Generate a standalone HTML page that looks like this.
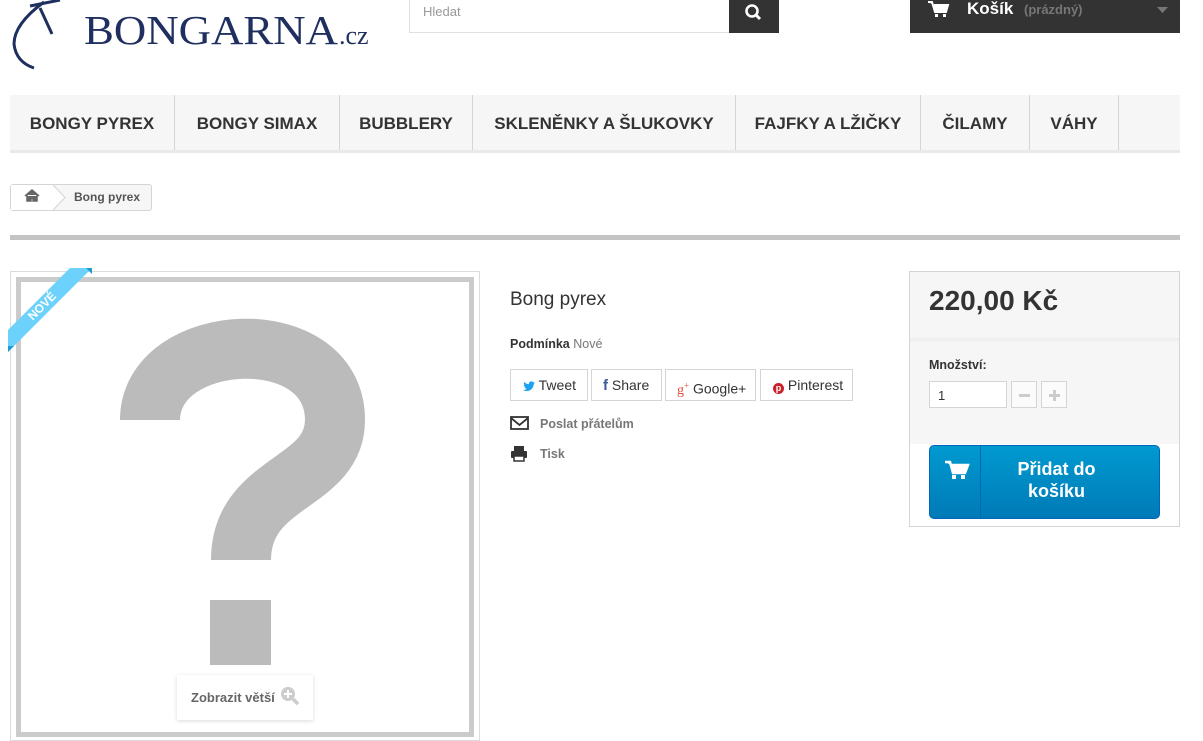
<!DOCTYPE html>
<html><head><meta charset="utf-8"><style>
*{box-sizing:border-box;margin:0;padding:0}
body{width:1203px;height:727px;overflow:hidden;background:#fff;font-family:"Liberation Sans",Arial,sans-serif;color:#333;position:relative}
.a{position:absolute}
.nav{left:10px;top:95px;width:1170px;height:58px;background:#f6f6f6;border-bottom:3px solid #e9e9e9}
.nav div{position:absolute;top:0;height:55px;line-height:57px;font-weight:bold;font-size:17px;color:#333;text-align:center;border-right:1px solid #d6d4d4}
.sb{border:1px solid #d6d4d4;background:#fff;font-size:14px;color:#333;height:32px;line-height:30px;top:369px}
</style></head><body>
<!-- logo -->
<svg class="a" style="left:0;top:0" width="400" height="80">
<path d="M44 2 Q14 24 14 44 Q16 62 34 68" fill="none" stroke="#1f2f5f" stroke-width="3"/>
<line x1="40" y1="8" x2="52" y2="34" stroke="#1f2f5f" stroke-width="3"/>
<line x1="30" y1="6" x2="60" y2="0" stroke="#1f2f5f" stroke-width="3"/>
<text x="84" y="44" font-family="Liberation Serif,serif" font-size="41" fill="#1f2f5f" textLength="254" lengthAdjust="spacingAndGlyphs">BONGARNA</text>
<text x="339" y="44" font-family="Liberation Serif,serif" font-size="26" fill="#1f2f5f">.cz</text>
</svg>
<!-- search -->
<div class="a" style="left:409px;top:-1px;width:321px;height:34px;border:1px solid #e0e0e0;font-size:13px;color:#999;padding:4px 13px">Hledat</div>
<div class="a" style="left:729px;top:0;width:50px;height:33px;background:#333">
<svg width="50" height="33"><circle cx="23" cy="11" r="5.5" fill="none" stroke="#fff" stroke-width="2.6"/><line x1="27" y1="15" x2="31" y2="19" stroke="#fff" stroke-width="3"/></svg></div>
<!-- cart -->
<div class="a" style="left:910px;top:0;width:270px;height:33px;background:#333">
<svg class="a" style="left:16px;top:0" width="24" height="20"><path d="M2 2h4l3 10h11l2-7H8" fill="#fff" stroke="#fff" stroke-width="2"/><rect x="9" y="14" width="3" height="3" fill="#fff"/><rect x="17" y="14" width="3" height="3" fill="#fff"/></svg>
<span class="a" style="left:57px;top:-1px;color:#fff;font-weight:bold;font-size:17px">Košík</span>
<span class="a" style="left:114px;top:2px;color:#777;font-weight:bold;font-size:13px">(prázdný)</span>
<svg class="a" style="left:246px;top:6px" width="14" height="8"><path d="M1 1h11l-5.5 6z" fill="#777"/></svg>
</div>
<!-- nav -->
<div class="a nav">
<div style="left:0;width:165px">BONGY PYREX</div>
<div style="left:165px;width:165px">BONGY SIMAX</div>
<div style="left:330px;width:133px">BUBBLERY</div>
<div style="left:463px;width:263px">SKLENĚNKY A ŠLUKOVKY</div>
<div style="left:726px;width:185px">FAJFKY A LŽIČKY</div>
<div style="left:911px;width:109px">ČILAMY</div>
<div style="left:1020px;width:89px">VÁHY</div>
</div>
<!-- breadcrumb -->
<div class="a" style="left:10px;top:184px;width:142px;height:27px;border:1px solid #d6d4d4;border-radius:3px;background:#f6f6f6">
<div class="a" style="left:0;top:0;width:42px;height:25px;background:#fff"></div>
<svg class="a" style="left:0;top:0" width="60" height="25"><path d="M42 0 L54 12.5 L42 25" fill="#fff" stroke="#d6d4d4"/><path d="M14 11 L21 5 L28 11 M16 10v6h4v-3h2v3h4v-6" fill="#666" stroke="#666" stroke-width="1.5"/></svg>
<span class="a" style="left:63px;top:5px;font-size:12px;font-weight:bold;color:#555">Bong pyrex</span>
</div>
<div class="a" style="left:10px;top:235px;width:1170px;height:5px;background:#c4c4c4"></div>
<!-- image -->
<div class="a" style="left:10px;top:271px;width:470px;height:470px;border:1px solid #dbdbdb"></div>
<div class="a" style="left:16px;top:277px;width:458px;height:460px;border:5px solid #cbcbcb;background:#fff"></div>
<svg class="a" style="left:0;top:0" width="490" height="727">
<path d="M150 420 C150 330 335 320 335 420 C335 485 241 480 241 560" fill="none" stroke="#bbb" stroke-width="60" stroke-linejoin="round"/>
<rect x="210" y="600" width="61" height="65" fill="#bbb"/>
<polygon points="8,330 8,352 92,268 70,268" fill="#6dd2fb"/>
<polygon points="86,268 92,268 92,274" fill="#1e9bd0"/>
<polygon points="8,346 8,352 14,346" fill="#1e9bd0"/>
<text transform="translate(42,306) rotate(-45)" text-anchor="middle" y="4" font-size="12" font-weight="bold" fill="#fff">NOVÉ</text>
</svg>
<div class="a" style="left:177px;top:675px;width:136px;height:45px;background:#fff;box-shadow:0 1px 4px rgba(0,0,0,.15);font-size:13px;font-weight:bold;color:#666;padding:15px 0 0 14px">Zobrazit větší
<svg class="a" style="left:102px;top:10px" width="22" height="22"><circle cx="9" cy="9" r="7" fill="#ccc"/><path d="M9 5v8M5 9h8" stroke="#fff" stroke-width="2"/><line x1="14" y1="14" x2="19" y2="19" stroke="#ccc" stroke-width="3.5"/></svg></div>
<!-- center -->
<div class="a" style="left:510px;top:289px;font-size:19px;color:#333">Bong pyrex</div>
<div class="a" style="left:510px;top:337px;font-size:12.5px;color:#777"><b style="color:#333">Podmínka</b> Nové</div>
<div class="a sb" style="left:510px;width:78px;padding-left:12px"><svg width="12" height="10" style="vertical-align:-1px"><path d="M12 1.5c-.5.2-1 .4-1.4.4.5-.3.9-.8 1.1-1.3-.5.3-1 .5-1.6.6C9.6.7 9 .4 8.3.4 7 .4 5.9 1.5 5.9 2.8c0 .2 0 .4.1.5C4 3.2 2.3 2.3 1.1.9.9 1.3.8 1.7.8 2.1.8 3 1.2 3.7 1.9 4.1 1.5 4.1 1.1 4 .8 3.8c0 1.2.8 2.1 1.9 2.4-.4.1-.8.1-1.1 0 .3.9 1.2 1.7 2.2 1.7C3 8.6 1.8 9 .6 9H0c1.1.7 2.3 1 3.7 1C8.2 10 10.7 6.3 10.7 3.1v-.3c.5-.3.9-.8 1.3-1.3z" fill="#1da1f2"/></svg> Tweet</div>
<div class="a sb" style="left:591px;width:71px;padding-left:11px"><b style="color:#3b5998;font-size:15px">f</b> Share</div>
<div class="a sb" style="left:665px;width:91px;padding-left:11px"><span style="color:#dd4b39;font-family:'Liberation Serif',serif">g<sup style="font-size:9px">+</sup></span> Google+</div>
<div class="a sb" style="left:760px;width:93px;padding-left:12px"><span style="display:inline-block;width:11px;height:11px;border-radius:50%;background:#cb2027;color:#fff;font-size:9px;line-height:11px;text-align:center;font-weight:bold;vertical-align:-1px">p</span> Pinterest</div>
<svg class="a" style="left:510px;top:416px" width="20" height="15"><rect x="1" y="1" width="17" height="12" fill="none" stroke="#333" stroke-width="1.8"/><path d="M1 2l8.5 7 8.5-7" fill="none" stroke="#333" stroke-width="1.8"/></svg>
<div class="a" style="left:540px;top:417px;font-size:12.5px;font-weight:bold;color:#777">Poslat přátelům</div>
<svg class="a" style="left:510px;top:445px" width="18" height="17"><rect x="4" y="1" width="10" height="5" fill="#333"/><rect x="1" y="6" width="16" height="7" rx="1" fill="#333"/><rect x="4" y="11" width="10" height="5" fill="#fff" stroke="#333" stroke-width="1.5"/></svg>
<div class="a" style="left:540px;top:447px;font-size:12.5px;font-weight:bold;color:#777">Tisk</div>
<!-- buy box -->
<div class="a" style="left:909px;top:271px;width:271px;height:256px;border:1px solid #d6d4d4;background:#fff">
<div class="a" style="left:0;top:0;width:269px;height:66px;background:#f6f6f6"></div>
<div class="a" style="left:0;top:66px;width:269px;height:5px;background:linear-gradient(#ececec,#f6f6f6)"></div>
<div class="a" style="left:0;top:71px;width:269px;height:101px;background:#f6f6f6"></div>
<div class="a" style="left:19px;top:13px;font-size:28px;font-weight:bold;color:#333">220,00 Kč</div>
<div class="a" style="left:19px;top:86px;font-size:12.5px;font-weight:bold;color:#333">Množství:</div>
<div class="a" style="left:19px;top:109px;width:78px;height:27px;border:1px solid #d6d4d4;background:#fff;font-size:13px;padding:6px 8px">1</div>
<div class="a" style="left:101px;top:109px;width:26px;height:27px;border:1px solid #d6d4d4;background:#fbfbfb"><div class="a" style="left:7px;top:12px;width:11px;height:3px;background:#ccc"></div></div>
<div class="a" style="left:131px;top:109px;width:26px;height:27px;border:1px solid #d6d4d4;background:#fbfbfb"><div class="a" style="left:7px;top:12px;width:11px;height:3px;background:#ccc"></div><div class="a" style="left:11px;top:8px;width:3px;height:11px;background:#ccc"></div></div>
<div class="a" style="left:19px;top:173px;width:231px;height:74px;border:1px solid #06b;border-radius:5px;background:linear-gradient(#009ad0,#007ab7)">
<div class="a" style="left:50px;top:0;width:1px;height:72px;background:#06b"></div>
<svg class="a" style="left:14px;top:14px" width="26" height="22"><path d="M1 2h5l3 11h12l3-8H7" fill="#fff" stroke="#fff" stroke-width="2.5"/><rect x="8" y="15" width="4" height="4" fill="#fff"/><rect x="17" y="15" width="4" height="4" fill="#fff"/></svg>
<div class="a" style="left:52px;top:12px;width:149px;text-align:center;color:#fff;font-weight:bold;font-size:18px;line-height:22px">Přidat do<br>košíku</div>
</div>
</div>
</body></html>
